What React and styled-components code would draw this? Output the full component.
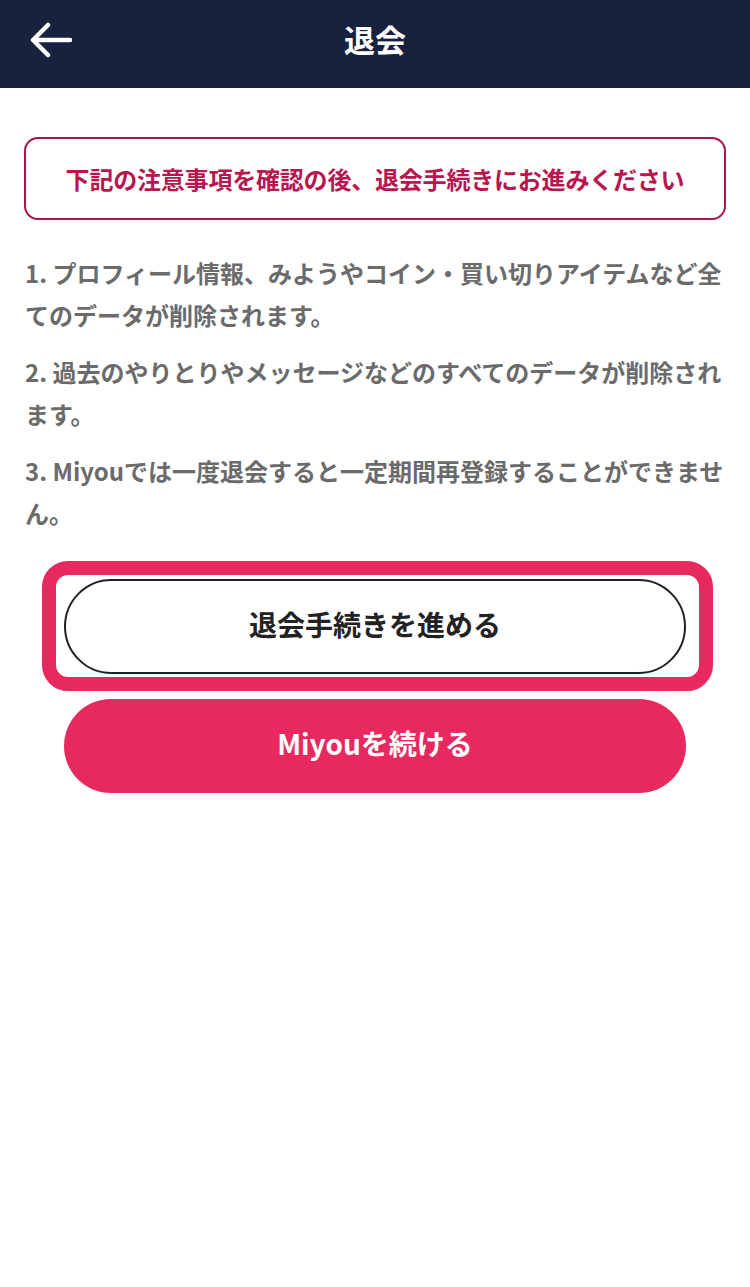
import React from 'react';
import styled, { createGlobalStyle } from 'styled-components';

const notes = [
  '1. プロフィール情報、みようやコイン・買い切りアイテムなど全てのデータが削除されます。',
  '2. 過去のやりとりやメッセージなどのすべてのデータが削除されます。',
  '3. Miyouでは一度退会すると一定期間再登録することができません。',
];

const App = () => {
  return (
    <>
      <GlobalStyle />
      <Page>
        <Header>
          <BackButton aria-label="戻る">
            <svg width="42" height="36" viewBox="0 0 42 36" fill="none">
              <path
                d="M40 18H4M18 3L3 18l15 15"
                stroke="#fff"
                strokeWidth="4.5"
                strokeLinecap="round"
                strokeLinejoin="round"
              />
            </svg>
          </BackButton>
          <Title>退会</Title>
        </Header>

        <Content>
          <Notice>下記の注意事項を確認の後、退会手続きにお進みください</Notice>
          <NoteList>
            {notes.map((n) => (
              <Note key={n}>{n}</Note>
            ))}
          </NoteList>
        </Content>

        <Actions>
          <Highlight>
            <PillButton>退会手続きを進める</PillButton>
          </Highlight>
          <PillButton primary>Miyouを続ける</PillButton>
        </Actions>
      </Page>
    </>
  );
};

export default App;

// -----------STYLED COMPONENTS---------

const GlobalStyle = createGlobalStyle`
  body {
    margin: 0;
    background: #fff;
    font-family: "Noto Sans CJK JP", "Noto Sans", sans-serif;
  }
`;

const Page = styled.div`
  min-height: 1287px;
  background: #fff;
`;

const Header = styled.header`
  position: relative;
  height: 88px;
  background: #18223f;
  display: flex;
  align-items: center;
  justify-content: center;
`;

const BackButton = styled.button`
  position: absolute;
  left: 30px;
  top: 22px;
  padding: 0;
  border: none;
  background: none;
  display: flex;
`;

const Title = styled.h1`
  margin: 0;
  color: #fff;
  font-size: 31px;
  font-weight: 700;
  line-height: 1;
  margin-top: -11px;
`;

const Content = styled.div`
  padding: 49px 24px 0;
`;

const Notice = styled.div`
  height: 83px;
  box-sizing: border-box;
  border: 2px solid #a8164a;
  border-radius: 14px;
  display: flex;
  align-items: center;
  justify-content: center;
  color: #b8164f;
  font-size: 24px;
  font-weight: 700;
  letter-spacing: -0.2px;
`;

const NoteList = styled.div`
  padding-top: 32px;
  display: flex;
  flex-direction: column;
  gap: 15px;
`;

const Note = styled.p`
  margin: 0;
  padding-left: 1px;
  color: #6b6b6b;
  font-size: 24px;
  font-weight: 700;
  line-height: 42px;
`;

const Actions = styled.div`
  padding-top: 27px;
  display: flex;
  flex-direction: column;
  align-items: center;
  gap: 8px;
`;

const Highlight = styled.div`
  align-self: flex-start;
  margin-left: 42px;
  width: 671px;
  box-sizing: border-box;
  border: 14px solid #e8295f;
  border-radius: 26px;
  padding: 4px 12px 3px 8px;
`;

const PillButton = styled.button`
  width: 622px;
  height: ${(p) => (p.primary ? '94px' : '95px')};
  box-sizing: border-box;
  border-radius: 48px;
  border: ${(p) => (p.primary ? 'none' : '2px solid #222')};
  background: ${(p) => (p.primary ? '#e8295f' : '#fff')};
  color: ${(p) => (p.primary ? '#fff' : '#222')};
  font-family: "Noto Sans CJK JP", "Noto Sans", sans-serif;
  font-size: 28px;
  font-weight: 700;
  display: flex;
  align-items: center;
  justify-content: center;
  padding: 0 0 6px;
`;
